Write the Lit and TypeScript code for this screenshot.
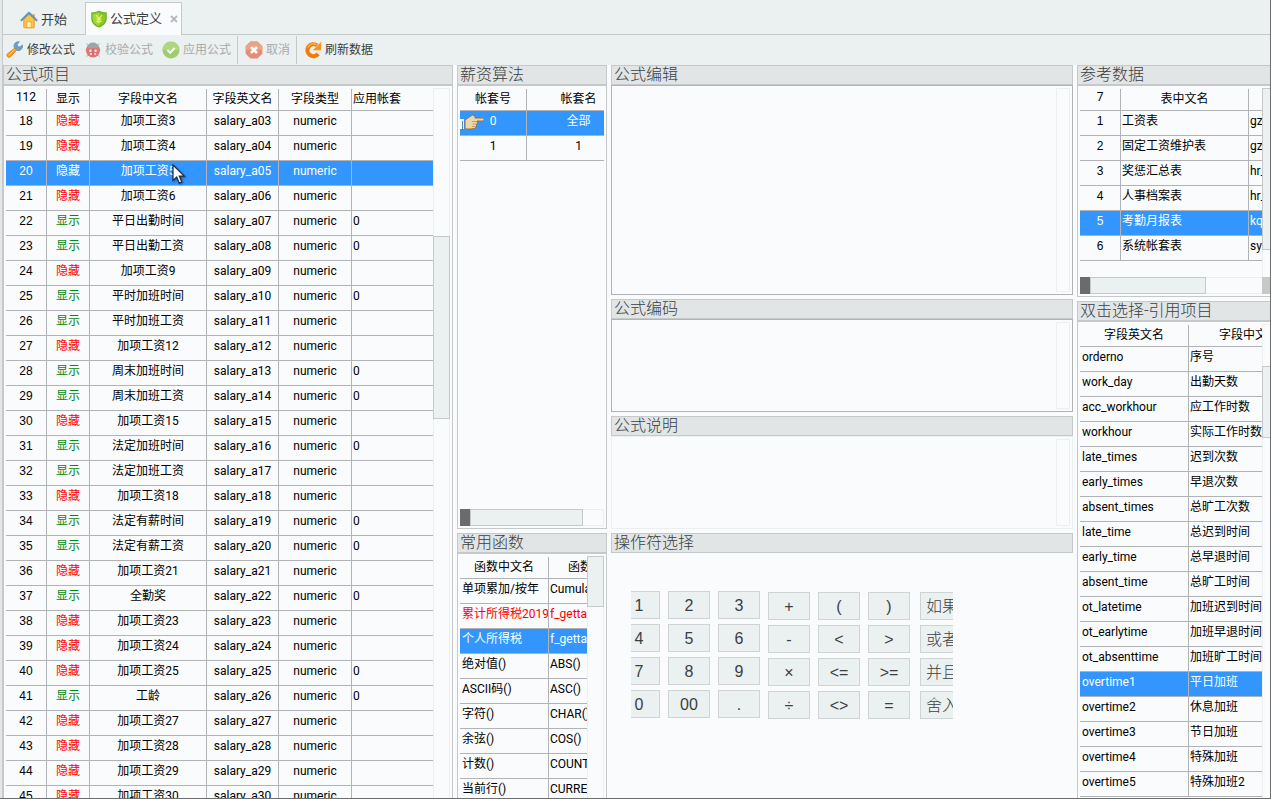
import { LitElement, html, css, svg, nothing } from "lit";
import { customElement, property } from "lit/decorators.js";
import { classMap } from "lit/directives/class-map.js";
import { styleMap } from "lit/directives/style-map.js";

type Cell = string | { t: string; c: string };
interface Column { label: string; width: number; align?: "left" | "center"; index?: boolean }
interface Row { cells: Cell[]; selected?: boolean; danger?: boolean; pointer?: boolean }

const svgHome = svg`
  <path d="M3.500 8.500 9 3.500l5.500 5V17a.8.8 0 0 1-.8.8H4.300a.8.8 0 0 1-.8-.8z" fill="#fcc544" stroke="#e0921c" stroke-width=".9"/>
  <path d="M13 3.200h2v4h-2z" fill="#e9a13a"/>
  <path d="M6.800 11.500h4.400v6H6.800z" fill="#fff3c8" stroke="#e0921c" stroke-width=".6"/>
  <path d="M1 9.800 9 1.800l8 8" fill="none" stroke="#5f93bd" stroke-width="2" stroke-linecap="round" stroke-linejoin="round"/>`;
const svgShield = svg`
  <path d="M9 .6C7 2 4 2.600.8 2.400V9c0 5 3.600 8 8.200 9.600C13.600 17 17.200 14 17.200 9V2.400C14 2.600 11 2 9 .6z" fill="#6fb820"/>
  <path d="M9 2.300C7.200 3.400 4.700 4 2.400 4v5c0 4 2.700 6.400 6.600 7.900z" fill="#a3d83c"/>
  <path d="M9 2.300C10.800 3.400 13.300 4 15.600 4v5c0 4-2.700 6.400-6.600 7.900z" fill="#8bc92b"/>
  <path d="M6 5.500l3 3.600 3-3.600M9 9v5M6.300 9.600h5.400M6.300 11.900h5.400" fill="none" stroke="#f4ee6a" stroke-width="1.300"/>`;
const svgWrench = svg`
  <path d="M16.800 4.200a4.600 4.600 0 0 1-6 5.600L8.300 7.300A4.600 4.600 0 0 1 13.600.9l-2.300 2.500.4 2.600 2.700.4z" fill="#6ba3d0" stroke="#3f7fb2" stroke-width=".7"/>
  <path d="M8.600 7.600l2 2-6.300 7a2.200 2.200 0 0 1-3.200-3.100z" fill="#ff9a2a" stroke="#e27110" stroke-width=".8"/>
  <path d="M8 9.500l-5.200 5" stroke="#ffc978" stroke-width="1" stroke-linecap="round"/>`;
const svgBug = svg`
  <path d="M2 2.500l3 3M16 2.500l-3 3M.8 9.500h3M17.200 9.500h-3M2 16.500l3-3M16 16.500l-3-3" stroke="#9db7cf" stroke-width="1.300"/>
  <circle cx="9" cy="10" r="7.400" fill="#dd3535"/>
  <path d="M2.800 6.300a6.400 6.400 0 0 1 12.400 0C12 8 6 8 2.800 6.300z" fill="#777e85"/>
  <circle cx="6.300" cy="10.300" r="1.300" fill="#ffe0e0"/><circle cx="11.700" cy="10.300" r="1.300" fill="#ffe0e0"/>
  <circle cx="6.800" cy="13.700" r="1.100" fill="#ffe0e0"/><circle cx="11.200" cy="13.700" r="1.100" fill="#ffe0e0"/>
  <path d="M9 7.500v9" stroke="#a81f1f" stroke-width=".8"/>`;
const svgCheck = svg`
  <circle cx="9" cy="9.500" r="9" fill="#78b92b"/>
  <path d="M.5 9.500a8.500 8.500 0 0 1 17 0z" fill="#8fca45"/>
  <path d="M5.300 9.500l2.800 2.800 4.800-5" fill="none" stroke="#fff" stroke-width="2.200"/>`;
const svgStop = svg`
  <path d="M5.300.6h7.400L17.800 5.600v7.800l-5.100 5H5.300L.2 13.400V5.600z" fill="#e4573a"/>
  <path d="M5.300.6h7.400L17.800 5.600v3.900H.2V5.600z" fill="#ec7a4c"/>
  <path d="M5.800 6.300l6.400 6.400M12.200 6.300l-6.400 6.400" stroke="#fff" stroke-width="2.800"/>`;
const svgReload = svg`
  <path d="M14.400 13.600A6.300 6.300 0 1 1 13.200 4.700" fill="none" stroke="#f77a08" stroke-width="4.400"/>
  <path d="M17.600.8v9H8.800z" fill="#ff9416"/>
  <path d="M3.600 7a6.300 6.300 0 0 1 9-3.200" fill="none" stroke="#ffb13c" stroke-width="1.600"/>`;

const icon = (body: unknown, size = 18) => html`<svg class="icon" width=${size} height=${size} viewBox="0 0 18 19" aria-hidden="true">${body}</svg>`;

const hand = html`<svg class="hand" width="24" height="18" viewBox="0 0 24 18" aria-hidden="true">
  <path d="M0 5h4v11H0z" fill="#eef6fb"/><path d="M0 15h4v2H0zM2 7h1v9H2z" fill="#4b8fc4"/>
  <path d="M5 6l5-3.500 2.500-1.500 2.500 1v2h7.500a1.300 1.300 0 0 1 0 3H17l.5 2-1 2-.5 2-1 1.500-4 .5H5z" fill="#ead7ae" stroke="#9a6f3a" stroke-width="1"/>
  <path d="M12 7.500h5M12.500 10h4M12 12.500h3.500" stroke="#b98d54" stroke-width=".8"/></svg>`;

const HIDE = { t: "隐藏", c: "red" };
const SHOW = { t: "显示", c: "green" };
const itemNames: [string, boolean, string][] = [
  ["加项工资3", false, ""], ["加项工资4", false, ""], ["加项工资5", false, ""], ["加项工资6", false, ""],
  ["平日出勤时间", true, "0"], ["平日出勤工资", true, "0"], ["加项工资9", false, ""],
  ["平时加班时间", true, "0"], ["平时加班工资", true, ""], ["加项工资12", false, ""],
  ["周末加班时间", true, "0"], ["周末加班工资", true, "0"], ["加项工资15", false, ""],
  ["法定加班时间", true, "0"], ["法定加班工资", true, ""], ["加项工资18", false, ""],
  ["法定有薪时间", true, "0"], ["法定有薪工资", true, "0"], ["加项工资21", false, ""],
  ["全勤奖", true, "0"], ["加项工资23", false, ""], ["加项工资24", false, ""], ["加项工资25", false, "0"],
  ["工龄", true, "0"], ["加项工资27", false, ""], ["加项工资28", false, ""], ["加项工资29", false, ""], ["加项工资30", false, ""],
];
const items: Row[] = itemNames.map(([name, shown, set], i) => ({
  cells: [String(18 + i), shown ? SHOW : HIDE, name, `salary_a${String(3 + i).padStart(2, "0")}`, "numeric", set],
  selected: i === 2,
}));
const itemCols: Column[] = [
  { label: "112", width: 41, index: true }, { label: "显示", width: 43 }, { label: "字段中文名", width: 117 },
  { label: "字段英文名", width: 72 }, { label: "字段类型", width: 73 }, { label: "应用帐套", width: 81, align: "left" },
];

const planCols: Column[] = [{ label: "帐套号", width: 67 }, { label: "帐套名", width: 103 }];
const plans: Row[] = [{ cells: ["0", "全部"], selected: true, pointer: true }, { cells: ["1", "1"] }];

const funcCols: Column[] = [{ label: "函数中文名", width: 89, align: "left" }, { label: "函数英文名", width: 98, align: "left" }];
const funcs: Row[] = [
  { cells: ["单项累加/按年", "Cumulative()"] }, { cells: ["累计所得税2019", "f_gettax2019()"], danger: true },
  { cells: ["个人所得税", "f_gettax()"], selected: true }, { cells: ["绝对值()", "ABS()"] }, { cells: ["ASCII码()", "ASC()"] },
  { cells: ["字符()", "CHAR()"] }, { cells: ["余弦()", "COS()"] }, { cells: ["计数()", "COUNT()"] }, { cells: ["当前行()", "CURRENT()"] },
];

const refCols: Column[] = [
  { label: "7", width: 41, index: true }, { label: "表中文名", width: 128, align: "left" }, { label: "表英文名", width: 110, align: "left" },
];
const refs: Row[] = [
  ["1", "工资表", "gz_data"], ["2", "固定工资维护表", "gz_fixed"], ["3", "奖惩汇总表", "hr_reward"],
  ["4", "人事档案表", "hr_file"], ["5", "考勤月报表", "kq_month"], ["6", "系统帐套表", "sys_set"],
].map((cells, i) => ({ cells, selected: i === 4 }));

const fieldCols: Column[] = [{ label: "字段英文名", width: 109, align: "left" }, { label: "字段中文名", width: 120, align: "left" }];
const fields: Row[] = [
  ["orderno", "序号"], ["work_day", "出勤天数"], ["acc_workhour", "应工作时数"], ["workhour", "实际工作时数"],
  ["late_times", "迟到次数"], ["early_times", "早退次数"], ["absent_times", "总旷工次数"], ["late_time", "总迟到时间"],
  ["early_time", "总早退时间"], ["absent_time", "总旷工时间"], ["ot_latetime", "加班迟到时间"], ["ot_earlytime", "加班早退时间"],
  ["ot_absenttime", "加班旷工时间"], ["overtime1", "平日加班"], ["overtime2", "休息加班"], ["overtime3", "节日加班"],
  ["overtime4", "特殊加班"], ["overtime5", "特殊加班2"],
].map((cells, i) => ({ cells, selected: i === 13 }));

@customElement("data-grid")
class DataGrid extends LitElement {
  @property({ attribute: false }) columns: Column[] = [];
  @property({ attribute: false }) rows: Row[] = [];
  @property() label = "";

  static styles = css`
    :host { display: block; min-width: 0; min-height: 0; overflow: hidden; }
    .grid { table-layout: fixed; border-collapse: separate; border-spacing: 0; font: 12px/18px Roboto, "Noto Sans CJK SC", sans-serif; color: #000; }
    .cell { box-sizing: border-box; height: 25px; padding: 0 2px 5px; border: solid #b1b3b6; border-width: 0 1px 1px 0; font-weight: 400; text-align: center; white-space: nowrap; overflow: hidden; vertical-align: middle; }
    .head { height: 22px; padding: 0 2px 2px; }
    .cell:last-child { border-right: 0; }
    .left { text-align: left; }
    .cell + .left { padding-left: 1px; }
    .index { font-family: "Liberation Sans", sans-serif; padding-right: 2px; }
    .head.index { padding-bottom: 3px; vertical-align: top; line-height: 16px; font-family: Roboto, sans-serif; }
    .red, .danger { color: #ff0000; }
    .green { color: #008a10; }
    .selected, .selected .red { background: #3296fe; color: #fff; }
    .pointed { position: relative; }
    .hand { position: absolute; left: 0; top: 3px; }
  `;

  render() {
    return html`<table class="grid" aria-label=${this.label} style=${styleMap({ width: `${this.columns.reduce((s, c) => s + c.width, 0)}px` })}>
      <colgroup>${this.columns.map((c) => html`<col style=${styleMap({ width: `${c.width}px` })} />`)}</colgroup>
      <thead><tr>${this.columns.map((c) => html`<th scope="col" class=${classMap({ cell: true, head: true, index: !!c.index, left: c.label === "应用帐套" })}>${c.label}</th>`)}</tr></thead>
      <tbody>${this.rows.map((r) => html`<tr class=${classMap({ selected: !!r.selected, danger: !!r.danger })}>
        ${r.cells.map((cell, i) => {
          const tinted = typeof cell !== "string";
          const c = this.columns[i];
          return html`<td class=${classMap({ cell: true, left: c.align === "left", index: !!c.index, pointed: !!r.pointer && i === 0, red: tinted && cell.c === "red", green: tinted && cell.c === "green" })}>${r.pointer && i === 0 ? hand : nothing}${tinted ? cell.t : cell}</td>`;
        })}</tr>`)}</tbody>
    </table>`;
  }
}

const keys = ["1", "2", "3", "4", "5", "6", "7", "8", "9", "0", "00", "."];
const ops = ["+", "(", ")", "-", "<", ">", "×", "<=", ">=", "÷", "<>", "="];
const words = ["如果", "或者", "并且", "舍入"];

@customElement("app-root")
class AppRoot extends LitElement {
  static styles = css`
    :host { display: block; height: 100vh; overflow: hidden; font: 12px/18px Roboto, "Noto Sans CJK SC", sans-serif; color: #3a3f42; }
    *, *::before { box-sizing: border-box; }
    button { font: inherit; color: inherit; }
    .page { height: 100%; display: flex; flex-direction: column; padding-left: 2px; background: linear-gradient(90deg, #e3e7e8 2px, #fafbfd 2px); border: solid #6b6d6f; border-width: 0 1px 1px 0; }
    .tabs { display: flex; height: 35px; padding-top: 2px; background: #ebf0f0; border-left: 1px solid #c5c9ca; box-shadow: inset 0 -1px #c5c9ca; }
    .tab { display: flex; align-items: center; gap: 3px; border: 0; background: none; padding: 2px 18px 0 17px; font-size: 13px; }
    .tab.active { padding: 0 3px 0 4px; gap: 2px; background: #fafbfd; border: solid #c5c9ca; border-width: 1px 1px 0; }
    .close { margin-left: 6px; }
    .tools { display: flex; align-items: center; height: 30px; padding: 0 2px; background: #ebf0f0; border-left: 1px solid #c5c9ca; }
    .tool { display: flex; align-items: center; gap: 3px; padding: 0 2px 0 1px; height: 26px; margin-right: 4px; border: 0; background: none; }
    .tool + .tool { margin-left: 2px; }
    .tool:disabled { color: #a7abad; }
    .tool:disabled .icon { opacity: .65; }
    .sep { width: 1px; height: 28px; margin-right: 6px; background: #c5c9ca; }
    .icon { flex: none; display: block; }
    .main { flex: 1; min-height: 0; display: grid; grid-template-columns: 450px 150px minmax(0, 1fr) 193px; gap: 4px; border-left: 1px solid #c5c9ca; }
    .col { min-width: 0; min-height: 0; display: grid; gap: 4px; }
    .one { grid-template-rows: minmax(0, 1fr); }
    .two { grid-template-rows: minmax(0, 464fr) minmax(0, 265fr); }
    .four { grid-template-rows: minmax(0, 230fr) minmax(0, 113fr) minmax(0, 113fr) minmax(0, 265fr); }
    .right { grid-template-rows: minmax(0, 232fr) minmax(0, 497fr); }
    .panel { min-height: 0; min-width: 0; display: flex; flex-direction: column; }
    .title { flex: none; height: 20px; margin: 0; padding: 0 2px; border: 1px solid #c5c9ca; background: #e1e5e6; font-size: 16px; line-height: 17px; font-weight: 300; white-space: nowrap; overflow: hidden; color: #3a3f42; }
    .body { flex: 1; min-height: 0; display: flex; flex-direction: column; padding: 2px; border: 1px solid #c5c9ca; }
    .cut { border-bottom: 0; padding-bottom: 0; }
    .right .title, .right .body { border-right: 0; padding-right: 0; }
    .view { flex: 1; min-height: 0; display: flex; }
    .view data-grid { flex: 1; padding-top: 1px; }
    .vbar { flex: none; width: 17px; border: 1px solid #ebeff0; border-bottom: 0; display: flex; flex-direction: column; }
    .right .vbar { width: 8px; border-right: 0; }
    .vthumb { flex: none; margin: -1px; border: 1px solid #c5c9ca; background: #ebf0f0; }
    .right .vthumb { margin-right: 0; border-right: 0; }
    .hbar { flex: none; height: 17px; display: flex; border: 1px solid #ebeff0; }
    .hend { width: 10px; margin: -1px 0 -1px -1px; background: #6b6b6b; }
    .hthumb { margin: -1px 0; border: 1px solid #c5c9ca; background: #ebf0f0; }
    .corner { width: 8px; margin: -1px -1px -1px auto; background: #c5c9ca; }
    .editor { flex: 1; min-height: 0; display: flex; padding: 2px; border: 1px solid #b1b3b6; }
    .editor.idle { border-color: #ebeff0; }
    .text { flex: 1; min-width: 0; border: 0; padding: 2px; resize: none; outline: 0; background: transparent; font: inherit; }
    .rail { width: 14px; border: 1px solid #ebeff0; }
    .pad { width: 322px; margin: 38px 20px 0; display: flex; justify-content: flex-end; gap: 8px; overflow: hidden; font: 16px/20px "Liberation Sans", "Noto Sans CJK SC", sans-serif; }
    .keys { flex: none; display: grid; grid-template-columns: repeat(3, 42px); grid-auto-rows: 28px; gap: 5px 8px; align-content: start; }
    .ops, .words { padding-top: 1px; }
    .words { grid-template-columns: 44px; width: 33px; margin-left: 2px; }
    .key { border: 1px solid #cfd3d4; background: #ebf0f0; padding: 1px 0 0; display: block; text-align: center; white-space: nowrap; }
    .words .key { font-weight: 300; }
    .cursor { position: fixed; left: 172px; top: 164px; filter: drop-shadow(1px 1px 1px #0006); }
  `;

  grid(label: string, columns: Column[], rows: Row[], offset: number, thumb: number, bar = true) {
    return html`<div class="view"><data-grid .label=${label} .columns=${columns} .rows=${rows}></data-grid>
      ${bar ? html`<div class="vbar"><div style=${styleMap({ height: `${offset}px` })}></div><div class="vthumb" style=${styleMap({ height: `${thumb}px` })}></div></div>` : nothing}
    </div>`;
  }

  tool(label: string, body: unknown, disabled = false) {
    return html`<button class="tool" ?disabled=${disabled}>${icon(body)}${label}</button>`;
  }

  editor(label: string, idle = false) {
    return html`<section class="panel"><h2 class="title">${label}</h2>
      <div class=${classMap({ editor: true, idle })}><textarea class="text" aria-label=${label}></textarea><div class="rail"></div></div></section>`;
  }

  render() {
    return html`<div class="page">
      <nav class="tabs" role="tablist">
        <button class="tab" role="tab" aria-selected="false">${icon(svgHome)}<span>开始</span></button>
        <button class="tab active" role="tab" aria-selected="true">${icon(svgShield)}<span>公式定义</span>
          <svg class="close" width="8" height="8" viewBox="0 0 8 8" aria-hidden="true"><path d="M1 1l6 6M7 1L1 7" stroke="#b4b8ba" stroke-width="1.800"/></svg></button>
      </nav>
      <div class="tools" role="toolbar">
        ${this.tool("修改公式", svgWrench)}${this.tool("校验公式", svgBug, true)}${this.tool("应用公式", svgCheck, true)}
        <span class="sep"></span>${this.tool("取消", svgStop, true)}<span class="sep"></span>${this.tool("刷新数据", svgReload)}
      </div>
      <main class="main">
        <div class="col one">
          <section class="panel"><h2 class="title">公式项目</h2>
            <div class="body cut">${this.grid("公式项目", itemCols, items, 148, 183)}</div></section>
        </div>
        <div class="col two">
          <section class="panel"><h2 class="title">薪资算法</h2>
            <div class="body">${this.grid("薪资算法", planCols, plans, 0, 0, false)}
              <div class="hbar"><div class="hend"></div><div class="hthumb" style=${styleMap({ width: "113px" })}></div></div></div></section>
          <section class="panel"><h2 class="title">常用函数</h2>
            <div class="body cut">${this.grid("常用函数", funcCols, funcs, 0, 51)}</div></section>
        </div>
        <div class="col four">
          ${this.editor("公式编辑")}${this.editor("公式编码")}${this.editor("公式说明", true)}
          <section class="panel"><h2 class="title">操作符选择</h2>
            <div class="pad">
              <div class="keys">${keys.map((k) => html`<button class="key">${k}</button>`)}</div>
              <div class="keys ops">${ops.map((k) => html`<button class="key">${k}</button>`)}</div>
              <div class="keys words">${words.map((k) => html`<button class="key">${k}</button>`)}</div>
            </div></section>
        </div>
        <div class="col right">
          <section class="panel"><h2 class="title">参考数据</h2>
            <div class="body">${this.grid("参考数据", refCols, refs, 0, 162)}
              <div class="hbar"><div class="hend"></div><div class="hthumb" style=${styleMap({ width: "116px" })}></div><div class="corner"></div></div></div></section>
          <section class="panel"><h2 class="title">双击选择-引用项目</h2>
            <div class="body cut">${this.grid("引用项目", fieldCols, fields, 42, 72)}</div></section>
        </div>
      </main>
      <svg class="cursor" width="14" height="21" viewBox="0 0 14 21" aria-hidden="true"><path d="M1 1v15.500l3.700-3.400 2.600 6 2.500-1.100-2.500-5.900h5z" fill="#fff" stroke="#1c2a4a" stroke-width="1.200"/></svg>
    </div>`;
  }
}
